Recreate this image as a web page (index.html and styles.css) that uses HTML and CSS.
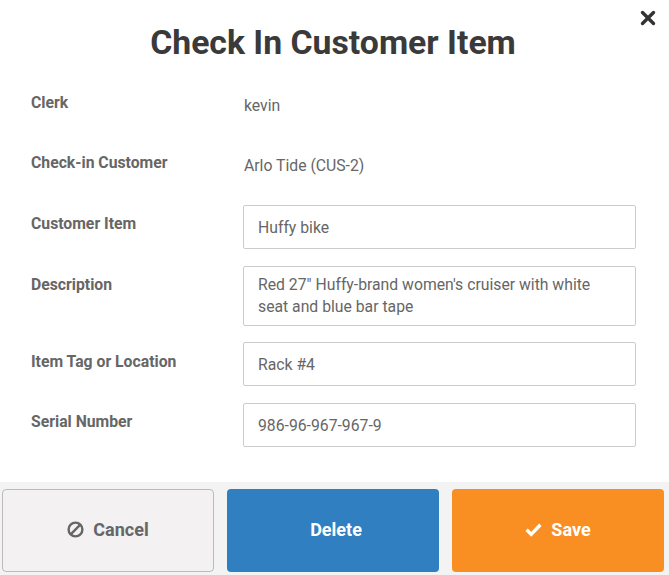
FILE: index.html
```html
<!DOCTYPE html>
<html lang="en">
<head>
<meta charset="utf-8">
<title>Check In Customer Item</title>
<link rel="stylesheet" href="styles.css">
</head>
<body>
<div class="modal">
  <button class="close" type="button" aria-label="Close">
    <svg viewBox="0 0 16 16" width="16" height="16"><path d="M2.5 2.5l11 11M13.5 2.5l-11 11" fill="none" stroke="#333" stroke-width="3.4" stroke-linecap="round"/></svg>
  </button>
  <h1 class="title">Check In Customer Item</h1>
  <form class="form">
    <div class="row static"><label class="label">Clerk</label><div class="value">kevin</div></div>
    <div class="row static"><label class="label">Check-in Customer</label><div class="value">Arlo Tide (CUS-2)</div></div>
    <div class="row"><label class="label">Customer Item</label><div class="field">Huffy bike</div></div>
    <div class="row"><label class="label">Description</label><div class="field area">Red 27" Huffy-brand women's cruiser with white seat and blue bar tape</div></div>
    <div class="row"><label class="label">Item Tag or Location</label><div class="field">Rack #4</div></div>
    <div class="row"><label class="label">Serial Number</label><div class="field">986-96-967-967-9</div></div>
  </form>
  <div class="footer">
    <button class="btn cancel" type="button">
      <svg viewBox="0 0 17 17" width="17" height="17"><circle cx="8.5" cy="8.5" r="6.9" fill="none" stroke="#666" stroke-width="2.4"/><path d="M3.7 13.3L13.3 3.7" stroke="#666" stroke-width="2.4"/></svg>
      Cancel
    </button>
    <button class="btn delete" type="button">Delete</button>
    <button class="btn save" type="button">
      <svg viewBox="0 0 17 17" width="17" height="17"><path d="M1.6 8.8l4.6 4.6 9.2-9.6" fill="none" stroke="#fff" stroke-width="3.4"/></svg>
      Save
    </button>
  </div>
</div>
</body>
</html>
```
FILE: styles.css
```css
* { box-sizing: border-box; }
html, body { margin: 0; padding: 0; background: #fff; }
body { font-family: Roboto, "Liberation Sans", sans-serif; color: #666; }
.modal { position: relative; width: 669px; height: 575px; display: flex; flex-direction: column; overflow: hidden; }
.close { position: absolute; top: 10px; right: 13px; padding: 0; border: 0; background: none; width: 16px; height: 16px; display: block; }
.close svg { display: block; }
.title { margin: 0; padding: 23px 3px 0 0; height: 83px; font-size: 33.75px; line-height: 40px; font-weight: 700; color: #3a3a3a; text-align: center; }
.form { padding: 0 33px 0 31px; display: flex; flex-direction: column; flex: 1; }
.row { display: grid; grid-template-columns: 212px 1fr; margin-bottom: 16.7px; }
.static { height: 44px; margin-bottom: 16px; }
.static + .row:not(.static) { margin-top: 2px; }
.label { font-size: 15.75px; line-height: 20px; font-weight: 700; color: #666; padding-top: 9.3px; }
.static .label { padding-top: 10px; }
.value { font-size: 15.75px; line-height: 20px; padding: 13px 0 0 1px; color: #666; }
.field { height: 44px; border: 1px solid #ccc; border-radius: 2px; padding: 11px 14px; font-size: 15.75px; line-height: 22px; color: #666; background: #fff; }
.area { height: 60px; padding: 7px 14px; }
.footer { height: 93px; background: #f3f3f3; padding: 7px 5px 3px 2px; display: grid; grid-template-columns: repeat(3, 212px); column-gap: 13px; }
.btn { border: 0; border-radius: 4px; font-family: inherit; font-size: 18px; font-weight: 700; display: flex; align-items: center; justify-content: center; gap: 9px; padding: 0 0 2px; }
.cancel { background: #f3f1f1; border: 1px solid #bbb; color: #666; }
.delete { background: #2f7fc1; color: #fff; padding-left: 6px; }
.save { background: #f98f22; color: #fff; }
```
